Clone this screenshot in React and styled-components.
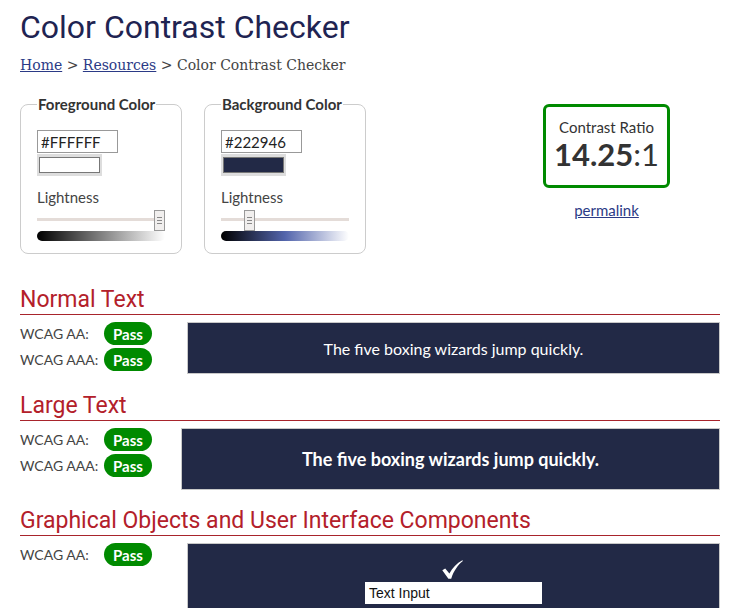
import React from "react";
import styled, { createGlobalStyle } from "styled-components";

const Global = createGlobalStyle`
  html, body { margin: 0; padding: 0; background: #fff; }
  body { font-family: "Lato", "Noto Sans", sans-serif; color: #333; }
  * { box-sizing: border-box; }
`;

const Page = styled.div`
  padding: 7px 13px 0 20px;
  width: 733px;
`;

const Title = styled.h1`
  margin: 0;
  font-family: "Roboto", sans-serif;
  font-weight: 400;
  font-size: 32px;
  line-height: 40px;
  color: #1f2452;
`;

const Crumbs = styled.nav`
  margin-top: 8px;
  font-family: "DejaVu Serif", serif;
  font-size: 14px;
  line-height: 20px;
  color: #444;
  a { color: #2b3a86; text-decoration: underline; }
`;

const Controls = styled.div`
  display: flex;
  align-items: flex-start;
  gap: 22px;
  margin-top: 21px;
`;

const Field = styled.fieldset`
  margin: 0;
  width: ${(p) => p.$w}px;
  height: 158px;
  border: 1px solid #ccc;
  border-radius: 8px;
  padding: 17px 16px 0 16px;
`;

const Legend = styled.legend`
  padding: 0 1px;
  font-weight: 700;
  font-size: 15px;
  line-height: 17px;
  color: #333;
`;

const HexInput = styled.input`
  display: block;
  width: 81px;
  height: 23px;
  border: 1px solid #999;
  padding: 0 3px;
  font-family: "Lato", sans-serif;
  font-size: 15px;
  color: #222;
  background: #fff;
  outline: none;
`;

const Swatch = styled.div`
  margin-top: 1px;
  width: 65px;
  height: 22px;
  background: #ddd;
  padding: 3px 2px;
`;

const SwatchFill = styled.div`
  height: 100%;
  border: 1px solid #777;
  background: ${(p) => p.$c};
`;

const Label = styled.div`
  margin-top: 12px;
  font-size: 15px;
  line-height: 18px;
  color: #444;
`;

const Slider = styled.div`
  position: relative;
  margin-top: 4px;
  width: 128px;
  height: 21px;
`;

const Track = styled.div`
  position: absolute;
  left: 0;
  right: 0;
  top: 8px;
  height: 3px;
  background: #e4dcd8;
`;

const Thumb = styled.div`
  position: absolute;
  top: 0;
  width: 11px;
  height: 21px;
  background: #f1efee;
  border: 1px solid #999;
  display: flex;
  flex-direction: column;
  justify-content: center;
  align-items: center;
  gap: 2px;
  span { display: block; width: 5px; height: 1px; background: #888; }
`;

const Gradient = styled.div`
  width: 128px;
  height: 10px;
  border-radius: 5px;
  background: ${(p) => p.$g};
`;

const Result = styled.div`
  margin-left: 155px;
  margin-top: 8px;
  display: flex;
  flex-direction: column;
  align-items: center;
`;

const RatioBox = styled.div`
  width: 127px;
  height: 84px;
  border: 3px solid #008a00;
  border-radius: 6px;
  display: flex;
  flex-direction: column;
  align-items: center;
  padding-top: 11px;
`;

const RatioLabel = styled.div`
  font-size: 15px;
  line-height: 18px;
  color: #333;
`;

const RatioValue = styled.div`
  font-size: 31px;
  line-height: 36px;
  color: #333;
  b { font-weight: 700; }
`;

const Permalink = styled.a`
  margin-top: 13px;
  font-size: 15px;
  line-height: 18px;
  color: #2b3a86;
  text-decoration: underline;
`;

const Section = styled.section`
  margin-top: ${(p) => p.$mt}px;
  width: 700px;
`;

const Heading = styled.h2`
  margin: 0;
  font-family: "Roboto", sans-serif;
  font-weight: 400;
  font-size: 23px;
  line-height: 28px;
  color: #b3202a;
  border-bottom: 1px solid #a8242c;
`;

const Body = styled.div`
  display: flex;
  align-items: flex-start;
  margin-top: 7px;
`;

const Checks = styled.div`
  width: ${(p) => p.$w}px;
  flex: none;
  display: flex;
  flex-direction: column;
  gap: 3px;
`;

const CheckRow = styled.div`
  display: flex;
  align-items: center;
  height: 23px;
`;

const CheckName = styled.span`
  width: 84px;
  font-size: 14px;
  color: #444;
`;

const Badge = styled.span`
  width: 48px;
  height: 23px;
  border-radius: 12px;
  background: #008a00;
  color: #fff;
  font-weight: 700;
  font-size: 15px;
  display: flex;
  align-items: center;
  justify-content: center;
`;

const Sample = styled.div`
  flex: 1;
  height: ${(p) => p.$h}px;
  background: #222946;
  border: 1px solid #c8c8c8;
  color: #fff;
  display: flex;
  align-items: center;
  justify-content: center;
  font-size: ${(p) => p.$fs}px;
  font-weight: ${(p) => p.$fw};
`;

const Graphic = styled.div`
  flex: 1;
  height: 110px;
  background: #222946;
  border: 1px solid #c8c8c8;
  display: flex;
  flex-direction: column;
  align-items: center;
  padding-top: 16px;
  gap: 3px;
`;

const CheckIcon = styled.svg`
  display: block;
  width: 21px;
  height: 19px;
  margin-left: -2px;
`;

const TextBox = styled.div`
  width: 177px;
  height: 22px;
  background: #fff;
  color: #111;
  font-family: "Liberation Sans", Arial, sans-serif;
  font-size: 14px;
  line-height: 22px;
  padding-left: 4px;
`;

function ColorField({ title, hex, color, pos, gradient, width }) {
  const left = Math.round(pos * (128 - 11));
  return (
    <Field $w={width}>
      <Legend>{title}</Legend>
      <HexInput defaultValue={hex} />
      <Swatch>
        <SwatchFill $c={color} />
      </Swatch>
      <Label>Lightness</Label>
      <Slider>
        <Track />
        <Thumb style={{ left }}>
          <span />
          <span />
          <span />
        </Thumb>
      </Slider>
      <Gradient $g={gradient} />
    </Field>
  );
}

function Checklist({ items, width }) {
  return (
    <Checks $w={width}>
      {items.map((n) => (
        <CheckRow key={n}>
          <CheckName>{n}:</CheckName>
          <Badge>Pass</Badge>
        </CheckRow>
      ))}
    </Checks>
  );
}

export default function App() {
  return (
    <>
      <Global />
      <Page>
        <Title>Color Contrast Checker</Title>
        <Crumbs>
          <a href="#">Home</a> &gt; <a href="#">Resources</a> &gt; Color Contrast Checker
        </Crumbs>
        <Controls>
          <ColorField
            title="Foreground Color"
            hex="#FFFFFF"
            color="#ffffff"
            pos={1}
            width={161}
            gradient="linear-gradient(to right, #000 0%, #808080 50%, #fff 100%)"
          />
          <ColorField
            title="Background Color"
            hex="#222946"
            color="#222946"
            pos={0.2}
            width={162}
            gradient="linear-gradient(to right, #000 0%, #5365ac 50%, #fff 100%)"
          />
          <Result>
            <RatioBox>
              <RatioLabel>Contrast Ratio</RatioLabel>
              <RatioValue>
                <b>14.25</b>:1
              </RatioValue>
            </RatioBox>
            <Permalink href="#">permalink</Permalink>
          </Result>
        </Controls>

        <Section $mt={32}>
          <Heading>Normal Text</Heading>
          <Body>
            <Checklist items={["WCAG AA", "WCAG AAA"]} width={167} />
            <Sample $h={52} $fs={16} $fw={400}>
              The five boxing wizards jump quickly.
            </Sample>
          </Body>
        </Section>

        <Section $mt={18}>
          <Heading>Large Text</Heading>
          <Body>
            <Checklist items={["WCAG AA", "WCAG AAA"]} width={161} />
            <Sample $h={62} $fs={18} $fw={700}>
              The five boxing wizards jump quickly.
            </Sample>
          </Body>
        </Section>

        <Section $mt={17}>
          <Heading>Graphical Objects and User Interface Components</Heading>
          <Body>
            <Checklist items={["WCAG AA"]} width={167} />
            <Graphic>
              <CheckIcon viewBox="0 0 21 19">
                <path
                  d="M0.3 10.3 L3.2 8.4 L7.4 13.6 C10.4 8 14.6 3.2 20.4 0.3 L20.9 1.1 C15.8 5.2 11.8 10.8 9.2 18.7 L6.4 18.7 Z"
                  fill="#fff"
                />
              </CheckIcon>
              <TextBox>Text Input</TextBox>
            </Graphic>
          </Body>
        </Section>
      </Page>
    </>
  );
}
